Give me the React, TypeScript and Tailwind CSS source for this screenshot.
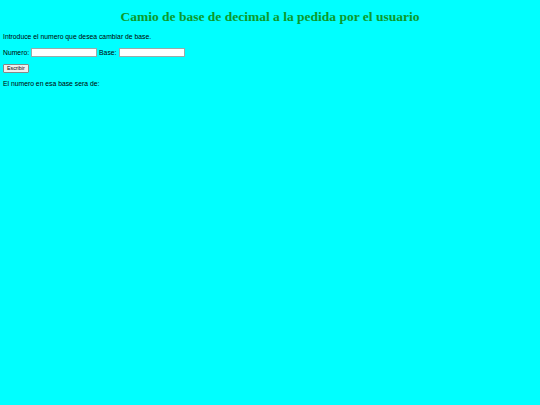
import React from "react";

export default function App() {
  return (
    <div className="min-h-[405px] w-full bg-[#00ffff] px-[3px] pt-[9px] text-[6.8px] leading-[8px] text-black" style={{ fontFamily: '"Liberation Sans", Arial, sans-serif' }}>
      <h1 className="mb-[9px] text-center text-[13.5px] font-bold leading-[15px] text-[#0c9a2c]" style={{ fontFamily: '"Liberation Serif", "Times New Roman", serif' }}>
        Camio de base de decimal a la pedida por el usuario
      </h1>
      <p className="mb-[7px]">Introduce el numero que desea cambiar de base.</p>
      <div className="mb-[7px] flex items-center gap-[2px]">
        <span>Numero:</span>
        <input className="h-[9px] w-[66px] border border-[#9aa] bg-white" />
        <span>Base:</span>
        <input className="ml-[1px] h-[9px] w-[66px] border border-[#9aa] bg-white" />
      </div>
      <button className="mb-[7px] h-[9px] rounded-[1px] border border-[#888] bg-[#efefef] px-[3px] text-[5.3px] leading-[7px]">Escribir</button>
      <p>El numero en esa base sera de:</p>
    </div>
  );
}
